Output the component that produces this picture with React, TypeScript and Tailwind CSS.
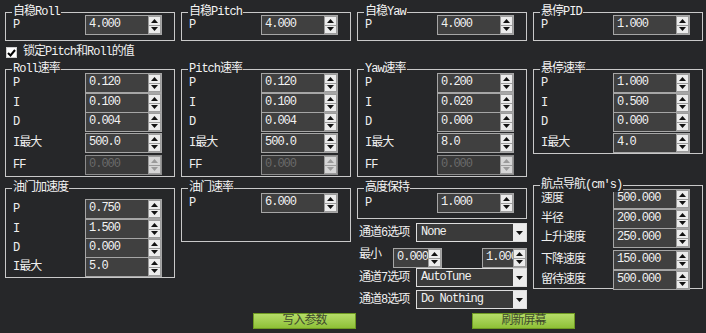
import React from "react";

const BG = "bg-[#262729]";

function Spin({ value, disabled = false, className = "w-[77px]" }: { value: string; disabled?: boolean; className?: string }) {
  const tri = disabled ? "#9a9a9a" : "#111";
  return (
    <div className={`flex h-[20px] shrink-0 border ${disabled ? "border-[#8c8c8c] bg-[#3a3a3a]" : "border-[#a6a6a6] bg-[#404040]"} ${className}`}>
      <div className={`flex-1 overflow-hidden whitespace-nowrap pl-[3px] leading-[16px] ${disabled ? "text-[#6a6a6a]" : "text-[#f2f2f2]"}`}>
        {value}
      </div>
      <div className="flex w-[13px] shrink-0 flex-col gap-[1px] bg-[#9c9c9c] p-[1px]">
        <div className={`flex flex-1 items-center justify-center ${disabled ? "bg-[#d6d6d6]" : "bg-[#ececec]"}`}>
          <svg width="7" height="4" viewBox="0 0 7 4"><path d="M3.5 0L7 4H0z" fill={tri} /></svg>
        </div>
        <div className={`flex flex-1 items-center justify-center ${disabled ? "bg-[#d6d6d6]" : "bg-[#ececec]"}`}>
          <svg width="7" height="4" viewBox="0 0 7 4"><path d="M0 0H7L3.5 4z" fill={tri} /></svg>
        </div>
      </div>
    </div>
  );
}

function Field({ label, value, className = "", disabled = false }: { label: string; value: string; className?: string; disabled?: boolean }) {
  return (
    <div className={`flex items-center ${className}`}>
      <span className="w-[79px] shrink-0 pl-[7px] leading-[14px] text-[#f0f0f0]">{label}</span>
      <Spin value={value} disabled={disabled} />
    </div>
  );
}

function Group({ title, className = "", children }: { title: string; className?: string; children?: React.ReactNode }) {
  return (
    <div className={`relative w-[170px] shrink-0 border border-[#c9c9c9] ${className}`}>
      <span className={`absolute left-[6px] top-[-8px] px-[1px] leading-[14px] text-[#f4f4f4] ${BG}`}>{title}</span>
      {children}
    </div>
  );
}

function Select({ label, value, className = "" }: { label: string; value: string; className?: string }) {
  return (
    <div className={`flex h-[19px] items-center ${className}`}>
      <span className="w-[59px] shrink-0 pl-[2px] text-[#f0f0f0]">{label}</span>
      <div className="flex h-[19px] w-[112px] border border-[#dedede] bg-[#3a3a3a]">
        <div className="flex-1 pl-[4px] leading-[17px] text-[#f2f2f2]">{value}</div>
        <div className="flex w-[13px] items-center justify-center bg-[#ececec]">
          <svg width="7" height="4" viewBox="0 0 7 4"><path d="M0 0H7L3.5 4z" fill="#111" /></svg>
        </div>
      </div>
    </div>
  );
}

function Button({ label }: { label: string }) {
  return (
    <button className="h-[16px] w-[103px] border border-[#6e9a22] bg-gradient-to-b from-[#b6dd68] to-[#8ec036] leading-[14px] text-[#3e4a2c]">
      {label}
    </button>
  );
}

export default function App() {
  return (
    <div className={`h-[333px] w-[706px] overflow-hidden text-[12px] tracking-[-1px] font-['Liberation_Mono','Noto_Sans_CJK_SC',monospace] ${BG}`}>
      {/* row 1 */}
      <div className="flex gap-[6px] pl-[5px] pt-[12px]">
        <Group title="自稳Roll" className="h-[29px]"><Field label="P" value="4.000" className="mt-[2px]" /></Group>
        <Group title="自稳Pitch" className="h-[29px]"><Field label="P" value="4.000" className="mt-[2px]" /></Group>
        <Group title="自稳Yaw" className="h-[29px]"><Field label="P" value="4.000" className="mt-[2px]" /></Group>
        <Group title="悬停PID" className="h-[29px]"><Field label="P" value="1.000" className="mt-[2px]" /></Group>
      </div>

      {/* checkbox */}
      <div className="mt-[5px] flex h-[13px] items-center pl-[6px]">
        <div className="flex h-[11px] w-[11px] items-center justify-center border border-[#d0d0d0] bg-white">
          <svg width="9" height="8" viewBox="0 0 9 8"><path d="M1 4L3.5 6.5L8 1" stroke="#000" strokeWidth="2" fill="none" /></svg>
        </div>
        <span className="ml-[6px] leading-[13px] text-[#f0f0f0]">锁定Pitch和Roll的值</span>
      </div>

      {/* row 2 */}
      <div className="mt-[10px] flex items-start gap-[6px] pl-[5px]">
        {[
          { t: "Roll速率", v: ["0.120", "0.100", "0.004", "500.0"] },
          { t: "Pitch速率", v: ["0.120", "0.100", "0.004", "500.0"] },
          { t: "Yaw速率", v: ["0.200", "0.020", "0.000", "8.0"] },
        ].map((g) => (
          <Group key={g.t} title={g.t} className="pb-[1px] pt-[3px]">
            <Field label="P" value={g.v[0]} />
            <Field label="I" value={g.v[1]} />
            <Field label="D" value={g.v[2]} className="mt-[-1px]" />
            <Field label="I最大" value={g.v[3]} className="mt-[1px]" />
            <Field label="FF" value="0.000" className="mt-[2px]" disabled />
          </Group>
        ))}
        <Group title="悬停速率" className="pt-[3px]">
          <Field label="P" value="1.000" />
          <Field label="I" value="0.500" />
          <Field label="D" value="0.000" className="mt-[-1px]" />
          <Field label="I最大" value="4.0" className="mt-[1px]" />
        </Group>
      </div>

      {/* row 3 */}
      <div className="mt-[8px] flex items-start gap-[6px] pl-[5px]">
        <Group title="油门加速度" className="mt-[3px] pt-[10px]">
          <Field label="P" value="0.750" />
          <Field label="I" value="1.500" />
          <Field label="D" value="0.000" className="mt-[-1px]" />
          <Field label="I最大" value="5.0" className="mt-[-1px]" />
        </Group>
        <Group title="油门速率" className="mt-[3px] h-[54px] pt-[4px]">
          <Field label="P" value="6.000" />
        </Group>
        <div className="mt-[3px] flex w-[170px] shrink-0 flex-col">
          <Group title="高度保持" className="h-[31px] pt-[4px]">
            <Field label="P" value="1.000" />
          </Group>
          <Select label="通道6选项" value="None" className="mt-[4px]" />
          <div className="mt-[6px] flex h-[19px] items-start">
            <span className="w-[36px] shrink-0 pl-[2px] leading-[14px] text-[#f0f0f0]">最小</span>
            <Spin value="0.000" className="h-[19px] w-[49px]" />
            <Spin value="1.000" className="ml-[40px] h-[19px] w-[45px]" />
          </div>
          <Select label="通道7选项" value="AutoTune" className="mt-[1px]" />
          <Select label="通道8选项" value="Do Nothing" className="mt-[3px]" />
        </div>
        <Group title="航点导航(cm's)" className="h-[104px] pt-[3px]">
          <Field label="速度" value="500.000" />
          <Field label="半径" value="200.000" />
          <Field label="上升速度" value="250.000" className="mt-[-1px]" />
          <Field label="下降速度" value="150.000" className="mt-[2px]" />
          <Field label="留待速度" value="500.000" />
        </Group>
      </div>

      {/* buttons */}
      <div className="mt-[4px] flex gap-[116px] pl-[253px]">
        <Button label="写入参数" />
        <Button label="刷新屏幕" />
      </div>
    </div>
  );
}
